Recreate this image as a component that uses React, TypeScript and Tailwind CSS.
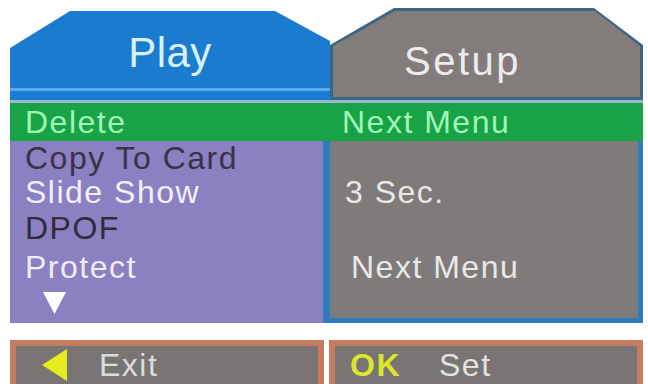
export default function App() {
  return (
    <div className="w-[648px] h-[384px] overflow-hidden bg-white font-['Liberation_Sans',Arial,sans-serif]">
      <div className="ml-[10px] w-[633px] pt-[8px]">
        {/* tabs */}
        <div className="flex h-[92px]">
          <div className="mt-[3px] flex w-[320px] flex-col bg-[#1b7bcf] [clip-path:polygon(60px_0,265px_0,100%_30px,100%_100%,0_100%,0_37px)]">
            <div className="flex-1 pt-[21px] text-center text-[42px] leading-none tracking-[0.5px] text-[#d9f1ff]">
              Play
            </div>
            <div className="h-[3px] bg-[#5aabf0]" />
            <div className="h-[9px]" />
          </div>
          <div className="w-[313px] bg-[#3b6584] [clip-path:polygon(64px_0,264px_0,100%_37px,100%_100%,0_100%,0_37px)] p-[3px]">
            <div className="h-full bg-[#827d7b] pl-[71px] pt-[30px] text-[40px] leading-none tracking-[2.5px] text-[#ececec] [clip-path:polygon(62px_0,262px_0,100%_35px,100%_100%,0_100%,0_35px)]">
              Setup
            </div>
          </div>
        </div>
        <div className="h-[3px] bg-[#9bb6d2]" />

        {/* highlighted row */}
        <div className="flex h-[38px] items-center bg-[#17a346] text-[32px] leading-none tracking-[1.5px] text-[#a2f5b8]">
          <div className="w-[313px] pl-[15px]">Delete</div>
          <div className="pl-[19px]">Next Menu</div>
        </div>

        {/* body */}
        <div className="flex h-[182px] text-[32px] leading-none tracking-[1.5px]">
          <div className="flex w-[313px] flex-col bg-[#8a80c2] pl-[15px]">
            <div className="flex h-[34px] items-center text-[#3a3247]">Copy To Card</div>
            <div className="flex h-[34px] items-center text-[#f3effb]">Slide Show</div>
            <div className="flex h-[38px] items-center text-[#332b3d]">DPOF</div>
            <div className="flex h-[40px] items-center text-[#f1ebf6]">Protect</div>
            <div className="flex h-[30px] items-center pl-[18px]">
              <svg width="23" height="23" viewBox="0 0 23 23">
                <polygon points="0,1 23,1 11.5,23" fill="#ffffff" />
              </svg>
            </div>
          </div>
          <div className="flex flex-1 flex-col border-b-[5px] border-l-[7px] border-r-[5px] border-[#2d7cc0] bg-[#7f7b7a] text-[#e8e8e8]">
            <div className="h-[34px]" />
            <div className="flex h-[34px] items-center pl-[15px]">3 Sec.</div>
            <div className="h-[38px]" />
            <div className="flex h-[40px] items-center pl-[21px]">Next Menu</div>
          </div>
        </div>

        {/* bottom buttons */}
        <div className="mt-[17px] flex gap-[5px] text-[32px] leading-none tracking-[1.5px]">
          <div className="flex h-[50px] w-[315px] items-center border-[6px] border-[#c47c5f] bg-[#797574] pl-[26px]">
            <svg width="25" height="32" viewBox="0 0 25 32">
              <polygon points="25,0 25,32 0,16" fill="#e6ec1e" />
            </svg>
            <span className="ml-[32px] text-[#dcdcdc]">Exit</span>
          </div>
          <div className="flex h-[50px] w-[315px] items-center border-[6px] border-[#c47c5f] bg-[#797574] pl-[15px]">
            <span className="font-bold text-[#d9e82c]">OK</span>
            <span className="ml-[38px] text-[#e2e2e2]">Set</span>
          </div>
        </div>
      </div>
    </div>
  );
}
